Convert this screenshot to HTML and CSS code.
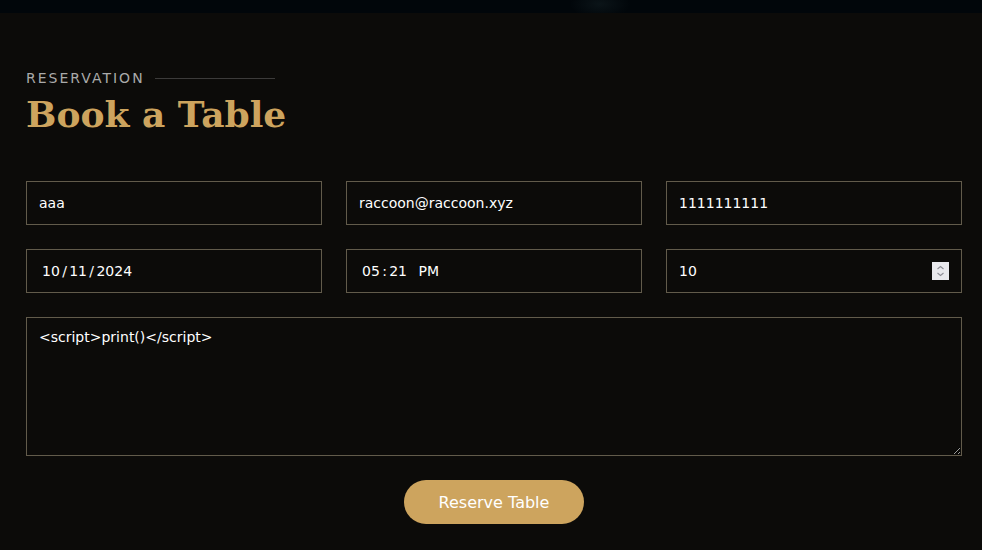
FILE: index.html
```html
<!DOCTYPE html>
<html lang="en">
<head>
<meta charset="utf-8">
<title>Book a Table</title>
<link rel="stylesheet" href="styles.css">
</head>
<body>
<div class="hero-strip"></div>
<section class="book">
  <div class="section-title">
    <h2>Reservation</h2>
    <p>Book a Table</p>
  </div>
  <form class="book-form">
    <div class="grid">
      <input class="field" type="text" value="aaa">
      <input class="field" type="email" value="raccoon@raccoon.xyz">
      <input class="field" type="text" value="1111111111">
      <input class="field field-dt" type="text" value="10&#8198;/&#8198;11&#8198;/&#8198;2024">
      <input class="field field-dt" type="text" value="05&#8198;:&#8198;21&#8194; PM">
      <div class="num-wrap">
        <input class="field" type="text" value="10">
        <span class="spinner" aria-hidden="true">
          <svg width="17" height="18" viewBox="0 0 17 18"><path d="M5.5 7 L8.5 4.5 L11.5 7" fill="none" stroke="#8e8e96" stroke-width="1.1"/><path d="M5.5 11 L8.5 13.5 L11.5 11" fill="none" stroke="#8e8e96" stroke-width="1.1"/></svg>
        </span>
      </div>
    </div>
    <textarea class="field message" rows="5"><script>print()</script></textarea>
    <div class="actions">
      <button type="button" class="btn">Reserve Table</button>
    </div>
  </form>
</section>
</body>
</html>
```
FILE: styles.css
```css
* { box-sizing: border-box; }
html, body { margin: 0; padding: 0; }
body {
  background: #0c0b09;
  font-family: "DejaVu Sans", sans-serif;
  color: #fff;
}
.hero-strip {
  height: 13px;
  background: radial-gradient(ellipse 30px 14px at 600px 4px, #0b1418 0%, rgba(1, 6, 10, 0) 100%), #01060a;
}
.book {
  padding: 56px 20px 26px 26px;
}
.section-title {
  padding-bottom: 47px;
}
.section-title h2 {
  margin: 0;
  font-size: 14px;
  font-weight: 400;
  letter-spacing: 2px;
  text-transform: uppercase;
  color: #aaaaaa;
  display: flex;
  align-items: center;
  height: 18px;
}
.section-title h2::after {
  content: "";
  width: 120px;
  height: 1px;
  background: rgba(255, 255, 255, 0.2);
  margin-left: 10px;
}
.section-title p {
  margin: 7px 0 0 0;
  font-family: "DejaVu Serif", serif;
  font-weight: 700;
  font-size: 36px;
  line-height: 40px;
  color: #cda45e;
}
.grid {
  display: grid;
  grid-template-columns: repeat(3, 1fr);
  column-gap: 24px;
  row-gap: 24px;
}
.field {
  display: block;
  width: 100%;
  height: 44px;
  margin: 0;
  padding: 10px 12px;
  border: 1px solid #625b4b;
  border-radius: 0;
  background: #0c0b09;
  color: #fff;
  font-family: "DejaVu Sans", sans-serif;
  font-size: 14px;
  outline: none;
}
.field-dt {
  padding-left: 15px;
}
.num-wrap { position: relative; }
.spinner {
  position: absolute;
  right: 13px;
  top: 13px;
  width: 17px;
  height: 18px;
  background: #e9e9ed;
  display: block;
}
.spinner svg { display: block; }
.message {
  margin-top: 24px;
  height: 139px;
  resize: vertical;
  line-height: 21px;
  padding: 9px 12px;
}
.actions {
  display: flex;
  justify-content: center;
  margin-top: 24px;
}
.btn {
  background: #cda45e;
  border: 0;
  width: 180px;
  height: 44px;
  border-radius: 50px;
  color: #fff;
  font-family: "DejaVu Sans", sans-serif;
  font-size: 16px;
  cursor: pointer;
}
```
